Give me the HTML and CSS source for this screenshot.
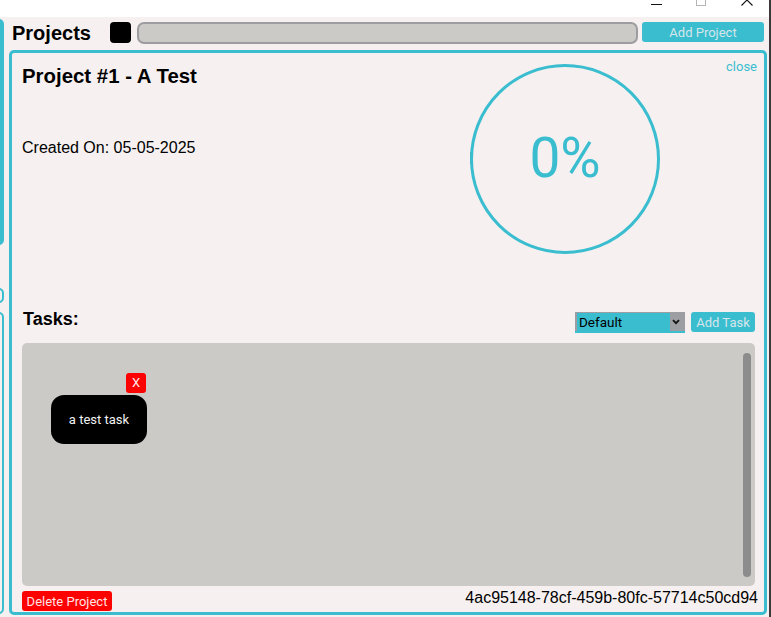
FILE: index.html
```html
<!DOCTYPE html>
<html lang="en">
<head>
<meta charset="utf-8">
<title>Projects</title>
<link rel="stylesheet" href="styles.css">
</head>
<body>
<div class="window">
  <div class="titlebar">
    <span class="wbtn">
      <svg class="wicon" width="11" height="17" viewBox="0 0 11 17"><line x1="0" y1="4.5" x2="11" y2="4.5" stroke="#111" stroke-width="1"/></svg>
    </span>
    <span class="wbtn">
      <svg class="wicon" width="11" height="17" viewBox="0 0 11 17"><rect x="0.5" y="-4.5" width="9" height="10" fill="none" stroke="#b4b4b4" stroke-width="1"/></svg>
    </span>
    <span class="wbtn">
      <svg class="wicon" width="12" height="17" viewBox="0 0 12 17"><path d="M0.5 -5.5 L11.5 5.5 M11.5 -5.5 L0.5 5.5" stroke="#111" stroke-width="1.1" fill="none"/></svg>
    </span>
  </div>
  <div class="app">
    <aside class="sidebar">
      <div class="side-item side-filled"></div>
      <div class="side-item side-outline side-short"></div>
      <div class="side-item side-outline side-tall"></div>
    </aside>
    <main class="main">
      <header class="header">
        <h1 class="app-title">Projects</h1>
        <span class="swatch"></span>
        <input class="project-input" type="text">
        <button class="btn btn-add-project">Add Project</button>
      </header>
      <section class="panel">
        <div class="panel-top">
          <div class="project-info">
            <h2 class="project-title">Project #1 - A Test</h2>
            <p class="created">Created On: 05-05-2025</p>
          </div>
          <div class="progress">
            <svg class="progress-ring" width="190" height="190" viewBox="0 0 190 190">
              <path d="M1 88 L1 100" stroke="#2b6e3a" stroke-width="1.2" fill="none"/>
              <circle cx="95" cy="95" r="93.5" fill="none" stroke="#3bbdd0" stroke-width="3"/>
            </svg>
            <span class="progress-label">0%</span>
          </div>
          <a class="close">close</a>
        </div>
        <div class="tasks-bar">
          <h3 class="tasks-title">Tasks:</h3>
          <div class="select">
            <span class="select-value">Default</span>
            <span class="select-arrow">
              <svg width="8" height="6" viewBox="0 0 8 6"><path d="M1 1.2 L4 4.2 L7 1.2" stroke="#111" stroke-width="1.8" fill="none"/></svg>
            </span>
          </div>
          <button class="btn btn-add-task">Add Task</button>
        </div>
        <div class="board">
          <div class="canvas">
            <div class="task-card">
              a test task
              <span class="task-remove">X</span>
            </div>
          </div>
          <div class="scrollbar"></div>
        </div>
        <div class="panel-footer">
          <button class="btn btn-delete">Delete Project</button>
          <span class="project-id">4ac95148-78cf-459b-80fc-57714c50cd94</span>
        </div>
      </section>
    </main>
  </div>
</div>
<div class="edge"></div>
</body>
</html>
```

FILE: styles.css
```css
* { box-sizing: border-box; }

html, body {
  margin: 0;
  padding: 0;
}

body {
  width: 771px;
  height: 617px;
  overflow: hidden;
  display: flex;
  background: #ffffff;
  font-family: "Liberation Sans", Arial, sans-serif;
  color: #000;
}

.window {
  width: 769px;
  display: flex;
  flex-direction: column;
  background: #f6f1f0;
}

.edge {
  width: 2px;
  background: #3a3a3a;
}

.titlebar {
  height: 17px;
  background: #ffffff;
  display: flex;
  justify-content: flex-end;
}

.wbtn {
  width: 45px;
  height: 17px;
  display: flex;
  justify-content: center;
  align-items: flex-start;
}

.wicon { display: block; overflow: visible; }

.app {
  flex: 1;
  display: flex;
}

.sidebar {
  width: 9px;
  flex-shrink: 0;
  overflow: hidden;
  display: flex;
  flex-direction: column;
}

.side-item {
  width: 60px;
  margin-left: -56px;
  border-radius: 5px;
  flex-shrink: 0;
}

.side-filled {
  margin-top: 2px;
  height: 226px;
  background: #3bbdd0;
}

.side-outline {
  border: 2px solid #3bbdd0;
}

.side-short {
  margin-top: 43px;
  height: 15px;
}

.side-tall {
  margin-top: 9px;
  height: 302px;
}

.main {
  width: 758px;
  display: flex;
  flex-direction: column;
}

.header {
  margin-top: 5px;
  height: 22px;
  padding: 0 3px;
  display: flex;
  align-items: flex-start;
}

.app-title {
  margin: 0 19px 0 0;
  font-size: 20px;
  line-height: 22px;
  font-weight: 700;
}

.swatch {
  width: 21px;
  height: 21px;
  background: #000;
  border-radius: 4px;
  flex-shrink: 0;
}

.project-input {
  flex: 1;
  min-width: 0;
  margin: 0 4px 0 6px;
  height: 22px;
  border: 2px solid #9d9da1;
  border-radius: 7px;
  background: #cccac6;
  padding: 0;
}

.btn {
  border: none;
  padding: 0;
  font-family: Roboto, "Liberation Sans", sans-serif;
  font-size: 13px;
  border-radius: 3px;
  cursor: pointer;
}

.btn-add-project {
  width: 122px;
  height: 20px;
  background: #3bbdd0;
  color: #d6e6ea;
}

.panel {
  margin-top: 6px;
  height: 565px;
  border: 3px solid #3bbdd0;
  border-radius: 5px;
  padding: 6px 9px 0 10px;
  display: flex;
  flex-direction: column;
}

.panel-top {
  display: flex;
  align-items: flex-start;
}

.project-info {
  flex: 1;
  margin-top: 6px;
}

.project-title {
  margin: 0;
  font-size: 20.4px;
  line-height: 23px;
  font-weight: 700;
}

.created {
  margin: 51px 0 0;
  font-size: 16px;
  line-height: 18px;
}

.progress {
  width: 190px;
  height: 190px;
  margin-top: 5px;
  display: grid;
  place-items: center;
}

.progress > * { grid-area: 1 / 1; }

.progress-ring { display: block; }

.progress-label {
  font-family: Roboto, "Liberation Sans", sans-serif;
  font-size: 55px;
  line-height: 1;
  color: #3bbdd0;
  padding-bottom: 2px;
}

.close {
  margin: 0 -2px 0 66px;
  font-family: Roboto, "Liberation Sans", sans-serif;
  font-size: 13px;
  line-height: 15px;
  color: #3bbdd0;
  cursor: pointer;
}

.tasks-bar {
  margin-top: 58px;
  height: 21px;
  display: flex;
  align-items: flex-start;
}

.tasks-title {
  flex: 1;
  margin: -2px 0 0 1px;
  font-size: 18px;
  line-height: 18px;
  font-weight: 700;
}

.select {
  width: 110px;
  height: 21px;
  display: flex;
  background: #9d9ea3;
  border-bottom: 2px solid #3bbdd0;
  padding: 1px 0 0 2px;
}

.select-value {
  flex: 1;
  background: #3bbdd0;
  font-family: Roboto, "Liberation Sans", sans-serif;
  font-size: 13.5px;
  line-height: 18px;
  padding-left: 2px;
  color: #000;
}

.select-arrow {
  width: 15px;
  display: flex;
  justify-content: flex-start;
  align-items: flex-start;
  padding: 6px 0 0 2px;
}

.select-arrow svg { display: block; }

.btn-add-task {
  margin-left: 6px;
  width: 64px;
  height: 20px;
  background: #3bbdd0;
  color: #d6e6ea;
}

.board {
  margin-top: 10px;
  height: 243px;
  background: #cccac6;
  border-radius: 5px;
  display: flex;
}

.canvas {
  flex: 1;
  padding: 52px 0 0 29px;
}

.task-card {
  position: relative;
  width: 96px;
  height: 49px;
  background: #000;
  border-radius: 13px;
  display: flex;
  align-items: center;
  justify-content: center;
  color: #f2f2f2;
  font-family: Roboto, "Liberation Sans", sans-serif;
  font-size: 13px;
}

.task-remove {
  position: absolute;
  top: -22px;
  right: 1px;
  width: 20px;
  height: 20px;
  background: #ff0000;
  border-radius: 3px;
  color: #ffe8e8;
  font-size: 13px;
  line-height: 20px;
  text-align: center;
}

.scrollbar {
  width: 8px;
  margin: 10px 4px 9px 0;
  background: #8c8c8c;
  border-radius: 4px;
}

.panel-footer {
  margin-top: 5px;
  display: flex;
  justify-content: space-between;
  align-items: flex-start;
}

.btn-delete {
  width: 90px;
  height: 20px;
  background: #ff0000;
  color: #ffe4e4;
}

.project-id {
  margin: -2px -3px 0 0;
  font-size: 16px;
  line-height: 18px;
}
```
